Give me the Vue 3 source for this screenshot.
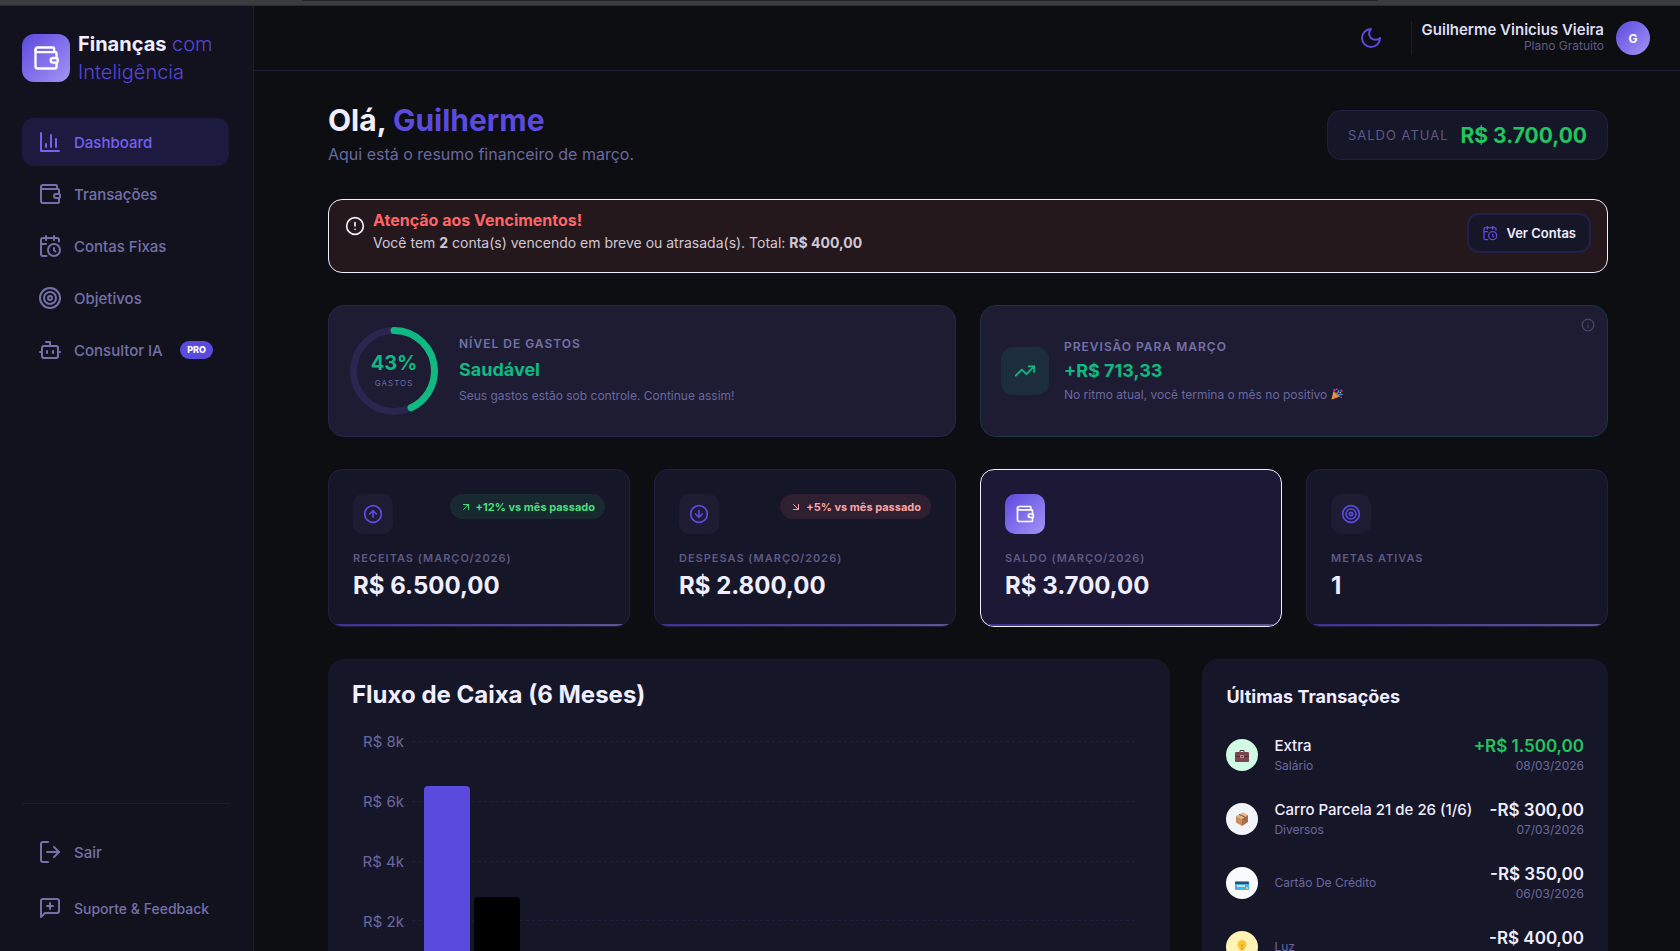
<script setup>
import { computed } from 'vue'

// Stroke icons, all on a 24x24 grid
const ICONS = {
  chart: ['M3 3v18h18', 'M8 17v-3', 'M13 17V5', 'M18 17V9'],
  wallet: [
    'M19 7V4a1 1 0 0 0-1-1H5a2 2 0 0 0 0 4h15a1 1 0 0 1 1 1v4h-3a2 2 0 0 0 0 4h3a1 1 0 0 0 1-1v-2a1 1 0 0 0-1-1',
    'M3 5v14a2 2 0 0 0 2 2h15a1 1 0 0 0 1-1v-4'
  ],
  calendar: [
    'M21 7.500V6a2 2 0 0 0-2-2H5a2 2 0 0 0-2 2v14a2 2 0 0 0 2 2h3.500',
    'M16 2v4', 'M8 2v4', 'M3 10h5', 'M17.500 17.500 16 16.300V14',
    'M22 16a6 6 0 1 1-12 0 6 6 0 0 1 12 0'
  ],
  target: [
    'M22 12a10 10 0 1 1-20 0 10 10 0 0 1 20 0',
    'M18 12a6 6 0 1 1-12 0 6 6 0 0 1 12 0',
    'M14 12a2 2 0 1 1-4 0 2 2 0 0 1 4 0'
  ],
  bot: [
    'M12 8V4H8',
    'M6 8h12a2 2 0 0 1 2 2v8a2 2 0 0 1-2 2H6a2 2 0 0 1-2-2v-8a2 2 0 0 1 2-2z',
    'M2 14h2', 'M20 14h2', 'M15 13v2', 'M9 13v2'
  ],
  logout: ['M10 22H5a2 2 0 0 1-2-2V4a2 2 0 0 1 2-2h5', 'M16 17l5-5-5-5', 'M21 12H9'],
  feedback: ['M21 15a2 2 0 0 1-2 2H7l-4 4V5a2 2 0 0 1 2-2h14a2 2 0 0 1 2 2z', 'M12 7v6', 'M9 10h6'],
  moon: ['M12 3a6 6 0 0 0 9 9 9 9 0 1 1-9-9z'],
  alert: ['M22 12a10 10 0 1 1-20 0 10 10 0 0 1 20 0', 'M12 8v4', 'M12 16h.01'],
  info: ['M22 12a10 10 0 1 1-20 0 10 10 0 0 1 20 0', 'M12 16v-4', 'M12 8h.01'],
  trend: ['M22 7l-8.500 8.500-5-5L2 17', 'M16 7h6v6'],
  up: ['M22 12a10 10 0 1 1-20 0 10 10 0 0 1 20 0', 'M16 12l-4-4-4 4', 'M12 16V8'],
  down: ['M22 12a10 10 0 1 1-20 0 10 10 0 0 1 20 0', 'M12 8v8', 'M8 12l4 4 4-4'],
  arrowUp: ['M7 7h10v10', 'M7 17 17 7'],
  arrowDown: ['M7 7l10 10', 'M17 7v10H7']
}

const menu = [
  { label: 'Dashboard', icon: 'chart', active: true },
  { label: 'Transações', icon: 'wallet' },
  { label: 'Contas Fixas', icon: 'calendar' },
  { label: 'Objetivos', icon: 'target' },
  { label: 'Consultor IA', icon: 'bot', pro: true }
]

const stats = [
  { label: 'Receitas (março/2026)', value: 'R$ 6.500,00', icon: 'up', trend: '+12% vs mês passado', tone: 'good' },
  { label: 'Despesas (março/2026)', value: 'R$ 2.800,00', icon: 'down', trend: '+5% vs mês passado', tone: 'bad' },
  { label: 'Saldo (março/2026)', value: 'R$ 3.700,00', icon: 'wallet', featured: true },
  { label: 'Metas ativas', value: '1', icon: 'target' }
]

const transactions = [
  { name: 'Extra', category: 'Salário', amount: '+R$ 1.500,00', date: '08/03/2026', kind: 'salary', income: true },
  { name: 'Carro Parcela 21 de 26 (1/6)', category: 'Diversos', amount: '-R$ 300,00', date: '07/03/2026', kind: 'misc' },
  { name: '', category: 'Cartão De Crédito', amount: '-R$ 350,00', date: '06/03/2026', kind: 'card' },
  { name: '', category: 'Luz', amount: '-R$ 400,00', date: '05/03/2026', kind: 'light' }
]

const spending = 43
const ringLength = 2 * Math.PI * 40.5
const ringDash = computed(() => `${(ringLength * spending) / 100} ${ringLength}`)

const MAX = 8000
const ticks = ['R$ 8k', 'R$ 6k', 'R$ 4k', 'R$ 2k', 'R$ 0k']
const bars = [
  { name: 'income', value: 6500 },
  { name: 'expense', value: 2800 }
]
const barHeight = (value) => `${(value / MAX) * 100}%`
</script>

<template>
  <div class="window">
    <div class="chrome"><div class="chrome-tab"></div></div>
    <div class="app">
      <aside class="sidebar">
        <div class="brand">
          <span class="brand-mark">
            <svg class="icon" width="28" height="28" viewBox="0 0 24 24"><path v-for="d in ICONS.wallet" :key="d" :d="d" /></svg>
          </span>
          <div class="brand-name">
            <div><strong>Finanças</strong> com</div>
            <div>Inteligência</div>
          </div>
        </div>

        <nav class="menu">
          <a v-for="item in menu" :key="item.label" href="#" class="menu-item" :class="{ active: item.active }">
            <svg class="icon" width="24" height="24" viewBox="0 0 24 24"><path v-for="d in ICONS[item.icon]" :key="d" :d="d" /></svg>
            <span>{{ item.label }}</span>
            <span v-if="item.pro" class="pro">PRO</span>
          </a>
        </nav>

        <div class="sidebar-footer">
          <button type="button" class="menu-item">
            <svg class="icon" width="24" height="24" viewBox="0 0 24 24"><path v-for="d in ICONS.logout" :key="d" :d="d" /></svg>
            <span>Sair</span>
          </button>
          <a href="#" class="menu-item small">
            <svg class="icon" width="24" height="24" viewBox="0 0 24 24"><path v-for="d in ICONS.feedback" :key="d" :d="d" /></svg>
            <span>Suporte &amp; Feedback</span>
          </a>
        </div>
      </aside>

      <div class="content">
        <header class="topbar">
          <button type="button" class="theme-toggle" aria-label="Alternar tema">
            <svg class="icon" width="24" height="24" viewBox="0 0 24 24"><path v-for="d in ICONS.moon" :key="d" :d="d" /></svg>
          </button>
          <div class="user">
            <div class="user-text">
              <span class="user-name">Guilherme Vinicius Vieira</span>
              <span class="user-plan">Plano Gratuito</span>
            </div>
            <span class="avatar">G</span>
          </div>
        </header>

        <main class="main">
          <div class="page">
            <section class="welcome">
              <div class="welcome-text">
                <h1>Olá, <span>Guilherme</span></h1>
                <p>Aqui está o resumo financeiro de março.</p>
              </div>
              <div class="balance">
                <span class="balance-label">Saldo atual</span>
                <span class="balance-value">R$ 3.700,00</span>
              </div>
            </section>

            <section class="alert">
              <svg class="icon" width="20" height="20" viewBox="0 0 24 24"><path v-for="d in ICONS.alert" :key="d" :d="d" /></svg>
              <div class="alert-text">
                <h2>Atenção aos Vencimentos!</h2>
                <p>Você tem <strong>2</strong> conta(s) vencendo em breve ou atrasada(s). Total: <strong>R$ 400,00</strong></p>
              </div>
              <button type="button" class="alert-button">
                <svg class="icon" width="16" height="16" viewBox="0 0 24 24"><path v-for="d in ICONS.calendar" :key="d" :d="d" /></svg>
                Ver Contas
              </button>
            </section>

            <section class="insights">
              <article class="insight">
                <div class="ring">
                  <svg width="90" height="90" viewBox="0 0 90 90">
                    <circle class="ring-track" cx="45" cy="45" r="40.5" />
                    <circle class="ring-value" cx="45" cy="45" r="40.5" :stroke-dasharray="ringDash" transform="rotate(-90 45 45)" />
                  </svg>
                  <div class="ring-text">
                    <strong>{{ spending }}%</strong>
                    <span>Gastos</span>
                  </div>
                </div>
                <div class="insight-text roomy">
                  <h3>Nível de gastos</h3>
                  <strong>Saudável</strong>
                  <p>Seus gastos estão sob controle. Continue assim!</p>
                </div>
              </article>

              <article class="insight forecast">
                <span class="forecast-icon">
                  <svg class="icon" width="22" height="22" viewBox="0 0 24 24"><path v-for="d in ICONS.trend" :key="d" :d="d" /></svg>
                </span>
                <div class="insight-text">
                  <h3>Previsão para março</h3>
                  <strong>+R$ 713,33</strong>
                  <p>
                    No ritmo atual, você termina o mês no positivo
                    <svg class="party" width="12" height="12" viewBox="0 0 24 24">
                      <path d="M1 23 5 6l13 11z" fill="#e8a33c" />
                      <path d="M4 15l6 6M6 9l9 9" stroke="#d9534f" stroke-width="2" />
                      <path d="M12 12c0-5 5-3 3-8M14 14c4-3 5 1 9-2" stroke="#4a90e2" stroke-width="3" fill="none" />
                      <path d="M5 2h4v4H5zM10 1h3v3h-3z" fill="#c2409c" />
                      <path d="M19 3h4v5h-4zM19 17h3v3h-3z" fill="#b0368c" />
                      <path d="M17 8h3v2h-3z" fill="#f2c14e" />
                    </svg>
                  </p>
                </div>
                <button type="button" class="info" aria-label="Informações">
                  <svg class="icon" width="14" height="14" viewBox="0 0 24 24"><path v-for="d in ICONS.info" :key="d" :d="d" /></svg>
                </button>
              </article>
            </section>

            <section class="stats">
              <article v-for="stat in stats" :key="stat.label" class="stat" :class="{ featured: stat.featured }">
                <div class="stat-top">
                  <span class="stat-icon">
                    <svg class="icon" width="20" height="20" viewBox="0 0 24 24"><path v-for="d in ICONS[stat.icon]" :key="d" :d="d" /></svg>
                  </span>
                  <span v-if="stat.trend" class="trend" :class="stat.tone">
                    <svg class="icon" width="12" height="12" viewBox="0 0 24 24"><path v-for="d in ICONS[stat.tone === 'good' ? 'arrowUp' : 'arrowDown']" :key="d" :d="d" /></svg>
                    {{ stat.trend }}
                  </span>
                </div>
                <h3>{{ stat.label }}</h3>
                <strong>{{ stat.value }}</strong>
              </article>
            </section>

            <section class="bottom">
              <article class="panel">
                <h2 class="chart-title">Fluxo de Caixa (6 Meses)</h2>
                <div class="chart">
                  <div class="axis">
                    <span v-for="tick in ticks" :key="tick">{{ tick }}</span>
                  </div>
                  <div class="plot">
                    <div class="grid-lines">
                      <svg v-for="tick in ticks" :key="tick" width="100%" height="1"><line x1="0" y1="0.5" x2="100%" y2="0.5" /></svg>
                    </div>
                    <div class="bars">
                      <div v-for="bar in bars" :key="bar.name" class="bar" :class="bar.name" :style="{ height: barHeight(bar.value) }"></div>
                    </div>
                  </div>
                </div>
              </article>

              <article class="panel">
                <h2 class="list-title">Últimas Transações</h2>
                <ul class="transactions">
                  <li v-for="item in transactions" :key="item.date">
                    <span class="category" :class="item.kind">
                      <svg v-if="item.kind === 'salary'" width="16" height="16" viewBox="0 0 16 16">
                        <path d="M6 5V3.500h4V5" fill="none" stroke="#4a2c38" stroke-width="1" />
                        <rect x="1" y="5" width="14" height="10" rx="1" fill="#7b4352" />
                        <path d="M1 9.500h14" stroke="#55303c" />
                        <rect x="6" y="8" width="4" height="3" fill="#d98257" />
                        <rect x="7" y="9" width="2" height="1" fill="#7b4352" />
                      </svg>
                      <svg v-else-if="item.kind === 'misc'" width="16" height="16" viewBox="0 0 16 16">
                        <path d="M2 5 9 1.500 14 4 8 8z" fill="#e3b487" />
                        <path d="M2 5l6 3v7l-6-3.500z" fill="#c98d60" />
                        <path d="M14 4 8 8v7l6-4z" fill="#a96e48" />
                        <path d="M5 3.500 11 6v3" stroke="#8a5638" fill="none" />
                      </svg>
                      <svg v-else-if="item.kind === 'card'" width="16" height="16" viewBox="0 0 16 16">
                        <rect x="1" y="6" width="14" height="9" rx="1" fill="#43b3e8" />
                        <rect x="1" y="7" width="14" height="2" fill="#27506e" />
                        <rect x="3" y="10" width="8" height="2" fill="#d5dbe2" />
                        <rect x="12" y="12" width="2" height="2" fill="#f1c443" />
                      </svg>
                      <svg v-else width="16" height="16" viewBox="0 0 16 16">
                        <path d="M8 1a4.500 4.500 0 0 0-4.500 4.500C3.500 8 5.500 9 6 11.500h4c.5-2.500 2.500-3.500 2.500-6A4.500 4.500 0 0 0 8 1z" fill="#fbc53a" />
                        <path d="M6.500 5.500 8 7l1.500-1.500M8 7v4" stroke="#f08c1e" fill="none" />
                        <rect x="6" y="12" width="4" height="3" rx="1" fill="#8797a5" />
                      </svg>
                    </span>
                    <div class="detail">
                      <span v-if="item.name" class="name">{{ item.name }}</span>
                      <span class="meta">{{ item.category }}</span>
                    </div>
                    <div class="detail right">
                      <span class="amount" :class="{ income: item.income }">{{ item.amount }}</span>
                      <span class="meta">{{ item.date }}</span>
                    </div>
                  </li>
                </ul>
              </article>
            </section>
          </div>
        </main>
      </div>
    </div>
  </div>
</template>

<style>
body {
  margin: 0;
  background: #0d0e12;
}
</style>

<style scoped>
* {
  box-sizing: border-box;
}

.window {
  display: flex;
  flex-direction: column;
  height: 100vh;
  background: #0d0e12;
  color: #f0eeff;
  font-family: Inter, "Liberation Sans", sans-serif;
  font-size: 15px;
}

h1, h2, h3, p, ul {
  margin: 0;
  padding: 0;
}

button {
  font: inherit;
  border: 0;
  background: none;
  cursor: pointer;
}

a {
  text-decoration: none;
}

.icon {
  display: block;
  flex: none;
  fill: none;
  stroke: currentColor;
  stroke-width: 2;
  stroke-linecap: round;
  stroke-linejoin: round;
}

.chrome {
  flex: none;
  height: 6px;
  background: #3c3b3f;
  border-bottom: 1px solid #2c2b30;
}

.chrome-tab {
  width: 64%;
  height: 1px;
  margin-left: 18%;
  background: #242329;
}

.app {
  display: flex;
  flex: 1;
  min-height: 0;
}

/* Sidebar */
.sidebar {
  display: flex;
  flex-direction: column;
  flex: none;
  width: 254px;
  padding: 24px 24px 19px 22px;
  background: #12111e;
  border-right: 1px solid #1e1b38;
}

.brand {
  display: flex;
  align-items: center;
  gap: 8px;
  height: 56px;
  margin-bottom: 32px;
}

.brand-mark {
  display: grid;
  place-items: center;
  flex: none;
  width: 48px;
  height: 48px;
  border-radius: 12px;
  background: linear-gradient(135deg, #5b4ade, #a394f6);
  color: #fff;
}

.brand-name {
  color: #5546d6;
  font-size: 20px;
  font-weight: 300;
  line-height: 28px;
}

.brand-name strong {
  color: #f0eeff;
  font-weight: 700;
}

.menu {
  display: flex;
  flex-direction: column;
  gap: 4px;
}

.menu-item {
  display: flex;
  align-items: center;
  gap: 12px;
  height: 48px;
  padding: 0 16px;
  border-radius: 12px;
  color: #7471a8;
  font-weight: 500;
  text-align: left;
  white-space: nowrap;
}

.menu-item.active {
  background: #1d1a40;
  color: #7461ef;
}

.menu-item.small {
  font-size: 14px;
}

.pro {
  margin-left: auto;
  padding: 0 7px;
  border-radius: 9px;
  background: #5b4ade;
  color: #fff;
  font-size: 9px;
  font-weight: 800;
  line-height: 18px;
}

.sidebar-footer {
  display: flex;
  flex-direction: column;
  gap: 8px;
  margin-top: auto;
  padding-top: 24px;
  border-top: 1px solid #1e1b38;
}

/* Top bar */
.content {
  display: flex;
  flex-direction: column;
  flex: 1;
  min-width: 0;
}

.topbar {
  display: flex;
  align-items: center;
  justify-content: flex-end;
  gap: 28px;
  flex: none;
  height: 65px;
  padding-right: 30px;
  border-bottom: 1px solid #1e1b38;
}

.theme-toggle {
  padding: 0;
  color: #5b4ade;
}

.user {
  display: flex;
  align-items: center;
  gap: 12px;
  padding-left: 10px;
  border-left: 1px solid #1e1b38;
}

.user-text {
  display: flex;
  flex-direction: column;
  align-items: flex-end;
}

.user-name {
  color: #dedcf2;
  font-size: 15px;
  font-weight: 600;
  line-height: 16px;
}

.user-plan {
  color: #5d5985;
  font-size: 12px;
  line-height: 16px;
}

.avatar {
  display: grid;
  place-items: center;
  width: 34px;
  height: 34px;
  border-radius: 50%;
  background: linear-gradient(135deg, #5b4ade, #a394f6);
  color: #fff;
  font-size: 12px;
  font-weight: 700;
}

/* Page */
.main {
  flex: 1;
  min-height: 0;
  padding: 32px 32px 32px 34px;
  overflow-y: auto;
  scrollbar-width: none;
}

.page {
  display: flex;
  flex-direction: column;
  gap: 32px;
  max-width: 1280px;
  margin: 0 auto;
}

.welcome {
  display: flex;
  align-items: center;
  justify-content: space-between;
  height: 64px;
}

.welcome-text {
  align-self: flex-start;
}

.welcome h1 {
  margin-bottom: 4px;
  font-size: 30px;
  font-weight: 700;
  line-height: 34px;
}

.welcome h1 span {
  color: #5b4ade;
}

.welcome p {
  color: #6a689f;
  font-size: 16px;
  line-height: 26px;
}

.balance {
  display: flex;
  align-items: center;
  gap: 12px;
  height: 50px;
  padding: 0 20px;
  border: 1px solid #231f42;
  border-radius: 14px;
  background: #161629;
}

.balance-label {
  color: #5d5985;
  font-size: 13px;
  letter-spacing: 1px;
  text-transform: uppercase;
}

.balance-value {
  color: #22c55e;
  font-size: 21px;
  font-weight: 700;
}

.alert {
  display: flex;
  align-items: flex-start;
  gap: 8px;
  height: 74px;
  padding: 13px 16px;
  border: 1px solid #f0eeff;
  border-radius: 14px;
  background: #25181d;
}

.alert > .icon {
  margin-top: 3px;
}

.alert-text {
  flex: 1;
}

.alert-text h2 {
  margin-top: -5px;
  color: #ff6467;
  font-size: 16px;
  font-weight: 700;
  line-height: 24px;
}

.alert-text p {
  color: #d0c9d6;
  font-size: 14px;
  line-height: 22px;
}

.alert-button {
  display: flex;
  align-items: center;
  gap: 8px;
  height: 40px;
  padding: 0 13px;
  border: 2px solid #231f48;
  border-radius: 12px;
  background: #161629;
  color: #f0eeff;
  font-size: 13px;
  font-weight: 600;
}

.alert-button .icon {
  color: #5b4ade;
}

.insights {
  display: grid;
  grid-template-columns: 1fr 1fr;
  gap: 24px;
}

.insight {
  position: relative;
  display: flex;
  align-items: center;
  gap: 20px;
  height: 132px;
  padding: 20px;
  border: 1px solid #29244d;
  border-radius: 16px;
  background: #1d1c33;
}

.forecast {
  gap: 15px;
  border-color: #1b3544;
}

.ring {
  display: grid;
  place-items: center;
}

.ring > * {
  grid-area: 1 / 1;
}

.ring circle {
  fill: none;
  stroke-width: 7;
}

.ring-track {
  stroke: #2b264f;
}

.ring-value {
  stroke: #10b981;
  stroke-linecap: round;
}

.ring-text {
  display: flex;
  flex-direction: column;
  align-items: center;
}

.ring-text strong {
  color: #10b981;
  font-size: 20px;
  line-height: 24px;
}

.ring-text span {
  color: #6a689f;
  font-size: 8px;
  letter-spacing: 1px;
  line-height: 16px;
  text-transform: uppercase;
}

.insight-text h3 {
  color: #7471a8;
  font-size: 12px;
  font-weight: 600;
  letter-spacing: 1px;
  line-height: 22px;
  text-transform: uppercase;
}

.insight-text strong {
  display: block;
  color: #10b981;
  font-size: 18px;
  font-weight: 700;
  line-height: 26px;
}

.insight-text p {
  color: #6a689f;
  font-size: 12px;
  line-height: 22px;
}

.insight-text.roomy {
  padding-bottom: 3px;
}

.insight-text.roomy strong {
  line-height: 30px;
}

.forecast-icon {
  display: grid;
  place-items: center;
  width: 48px;
  height: 48px;
  border-radius: 12px;
  background: #1c2d3c;
  color: #10b981;
}

.party {
  vertical-align: -1px;
}

.info {
  position: absolute;
  top: 12px;
  right: 12px;
  padding: 0;
  color: #4a466f;
}

.stats {
  display: grid;
  grid-template-columns: repeat(4, 1fr);
  gap: 24px;
}

.stat {
  position: relative;
  height: 158px;
  padding: 24px;
  border: 1px solid #231f42;
  border-radius: 14px;
  background: #161629;
  overflow: hidden;
}

.stat::after {
  content: "";
  position: absolute;
  right: 0;
  bottom: 0;
  left: 0;
  height: 2px;
  background: linear-gradient(90deg, #3d3290, #5f5591);
}

.stat.featured {
  border-color: #f0eeff;
  background: #1d1836;
}

.stat-top {
  display: flex;
  align-items: flex-start;
  justify-content: space-between;
  margin-bottom: 14px;
}

.stat-icon {
  display: grid;
  place-items: center;
  width: 40px;
  height: 40px;
  border-radius: 10px;
  background: #1d1c33;
  color: #5b4ade;
}

.featured .stat-icon {
  background: linear-gradient(135deg, #5b4ade, #a394f6);
  color: #fff;
}

.trend {
  display: flex;
  align-items: center;
  gap: 4px;
  height: 25px;
  padding: 0 10px;
  border-radius: 13px;
  font-size: 11px;
  font-weight: 700;
}

.trend.good {
  background: #182a30;
  color: #4ade80;
}

.trend.bad {
  background: #2e1f31;
  color: #fca5a5;
}

.stat h3 {
  color: #5d5985;
  font-size: 11px;
  font-weight: 600;
  letter-spacing: 1px;
  line-height: 20px;
  text-transform: uppercase;
}

.stat strong {
  display: block;
  font-size: 24px;
  font-weight: 700;
  line-height: 36px;
}

.bottom {
  display: grid;
  grid-template-columns: 27fr 13fr;
  gap: 32px;
}

.panel {
  min-width: 0;
  padding: 20px 24px 24px;
  border-radius: 16px;
  background: #161629;
}

.chart-title {
  font-size: 24px;
  font-weight: 700;
  line-height: 32px;
}

.list-title {
  margin-bottom: 20px;
  font-size: 18px;
  font-weight: 700;
  line-height: 36px;
}

.chart {
  display: flex;
  gap: 8px;
  margin-top: 20px;
}

.axis {
  display: flex;
  flex-direction: column;
  flex: none;
  width: 52px;
  color: #6a689f;
  text-align: right;
}

.axis span {
  height: 60px;
  line-height: 22px;
}

.plot {
  display: grid;
  flex: 1;
  height: 240px;
  margin-top: 10px;
  margin-right: 10px;
}

.grid-lines,
.bars {
  grid-area: 1 / 1;
  min-height: 0;
}

.grid-lines {
  display: flex;
  flex-direction: column;
  justify-content: space-between;
}

.grid-lines svg {
  display: block;
}

.grid-lines line {
  stroke: #201e3a;
  stroke-dasharray: 3 3;
}

.bars {
  display: flex;
  align-items: flex-end;
  gap: 4px;
  padding-left: 12px;
}

.bar {
  width: 46px;
  border-radius: 4px 4px 0 0;
}

.bar.income {
  background: #5b4ade;
}

.bar.expense {
  background: #000;
}

.transactions {
  display: flex;
  flex-direction: column;
  gap: 24px;
  list-style: none;
}

.transactions li {
  display: flex;
  align-items: center;
  gap: 16px;
  height: 40px;
}

.category {
  display: grid;
  place-items: center;
  flex: none;
  width: 32px;
  height: 32px;
  border-radius: 50%;
}

.category.salary {
  background: #d1fae5;
}

.category.misc {
  background: #f1f5f9;
}

.category.card {
  background: #f8fafc;
}

.category.light {
  background: #fef3b5;
}

.detail {
  display: flex;
  flex-direction: column;
  flex: 1;
  min-width: 0;
  white-space: nowrap;
}

.detail.right {
  flex: none;
  align-items: flex-end;
}

.name,
.amount {
  line-height: 22px;
}

.name {
  font-weight: 500;
}

.amount {
  font-size: 17px;
  font-weight: 600;
}

.amount.income {
  color: #22c55e;
}

.meta {
  color: #6a689f;
  font-size: 12px;
  line-height: 18px;
}
</style>
